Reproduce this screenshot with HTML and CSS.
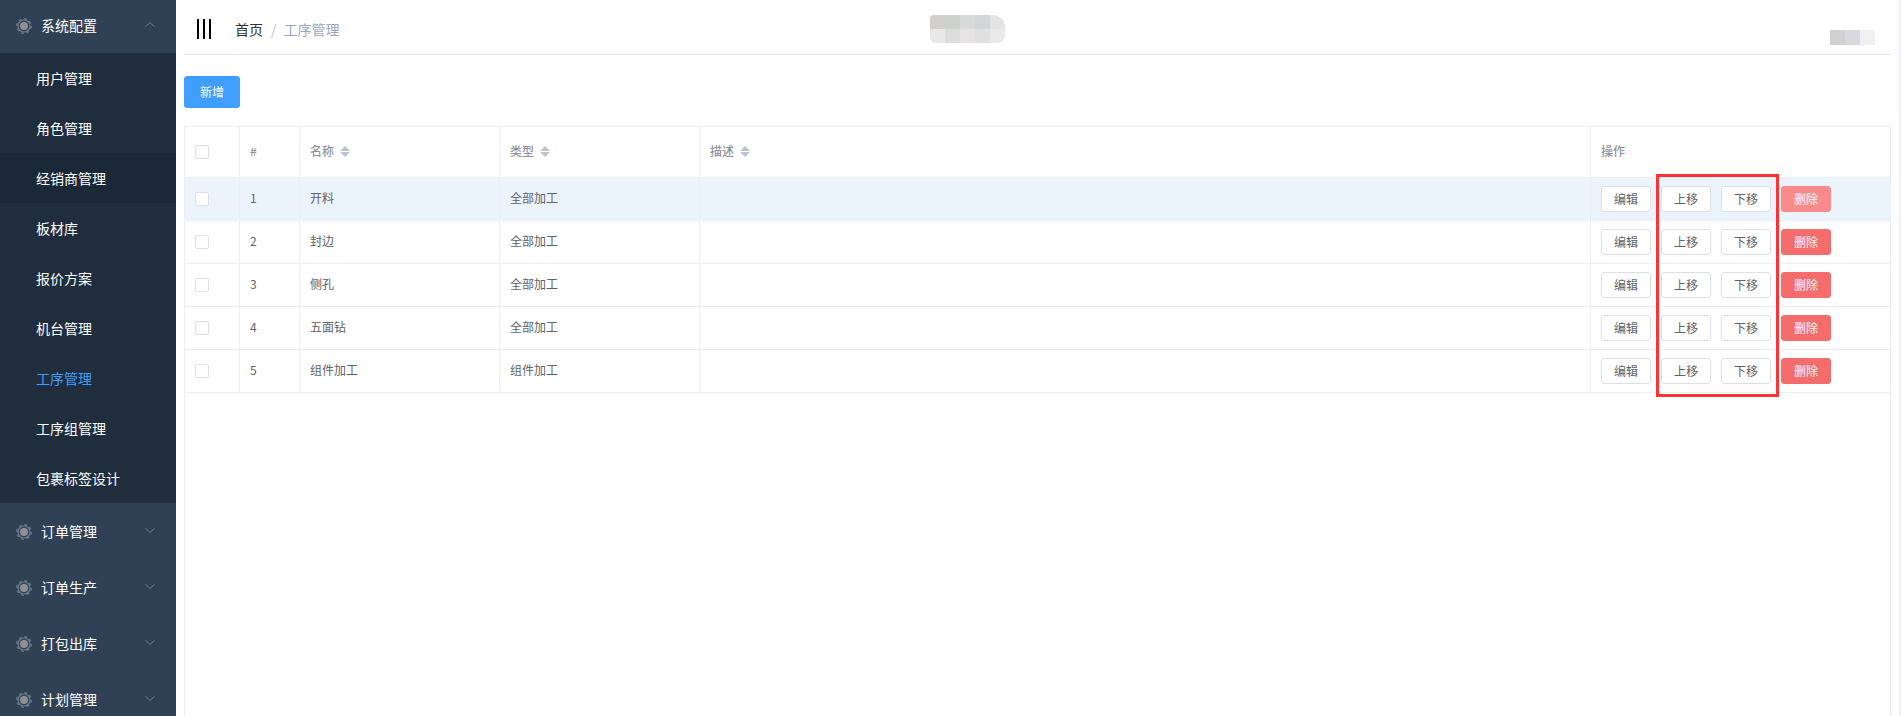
FILE: index.html
```html
<!DOCTYPE html>
<html>
  <head>
    <meta charset="utf-8" />
    <title>工序管理</title>
    <link rel="stylesheet" href="styles.css">
  </head>
  <body>
    <svg class="defs" width="0" height="0">
      <symbol id="gear" viewBox="0 0 16 16">
        <circle cx="8" cy="8" r="6" fill="none" stroke="currentColor" stroke-width="1.2" />
        <circle cx="8" cy="8" r="7.2" fill="none" stroke="currentColor" stroke-width="1.4" stroke-dasharray="2.8 2.85" />
        <circle cx="8" cy="8" r="4" fill="#8b9099" />
      </symbol>
    </svg>

    <div class="app">
      <div class="sidebar">
        <div class="menu-title">
          <svg class="gear"><use href="#gear" /></svg>
          <span>系统配置</span>
          <svg class="arrow" viewBox="0 0 10 5"><path d="M.5 4.6L5 .6l4.5 4" /></svg>
        </div>
        <div class="menu-item">用户管理</div>
        <div class="menu-item">角色管理</div>
        <div class="menu-item hover">经销商管理</div>
        <div class="menu-item">板材库</div>
        <div class="menu-item">报价方案</div>
        <div class="menu-item">机台管理</div>
        <div class="menu-item active">工序管理</div>
        <div class="menu-item">工序组管理</div>
        <div class="menu-item">包裹标签设计</div>
        <div class="menu-title">
          <svg class="gear"><use href="#gear" /></svg>
          <span>订单管理</span>
          <svg class="arrow" viewBox="0 0 10 5"><path d="M.5 .4L5 4.4l4.5-4" /></svg>
        </div>
        <div class="menu-title">
          <svg class="gear"><use href="#gear" /></svg>
          <span>订单生产</span>
          <svg class="arrow" viewBox="0 0 10 5"><path d="M.5 .4L5 4.4l4.5-4" /></svg>
        </div>
        <div class="menu-title">
          <svg class="gear"><use href="#gear" /></svg>
          <span>打包出库</span>
          <svg class="arrow" viewBox="0 0 10 5"><path d="M.5 .4L5 4.4l4.5-4" /></svg>
        </div>
        <div class="menu-title">
          <svg class="gear"><use href="#gear" /></svg>
          <span>计划管理</span>
          <svg class="arrow" viewBox="0 0 10 5"><path d="M.5 .4L5 4.4l4.5-4" /></svg>
        </div>
      </div>

      <div class="main">
        <div class="navbar">
          <div class="hamburger"><i></i><i></i><i></i></div>
          <div class="breadcrumb">
            <span class="crumb-home">首页</span>
            <span class="crumb-sep">/</span>
            <span class="crumb-current">工序管理</span>
          </div>
          <div class="mosaic mosaic-title">
            <i></i><i></i><i></i><i></i><i></i>
            <i></i><i></i><i></i><i></i><i></i>
          </div>
          <div class="mosaic mosaic-user"><i></i><i></i><i></i></div>
        </div>

        <div class="toolbar">
          <button class="btn btn-primary">新增</button>
        </div>

        <div class="table-wrap">
          <table class="data-table">
            <colgroup>
              <col class="col-check" />
              <col class="col-index" />
              <col class="col-name" />
              <col class="col-type" />
              <col />
              <col class="col-actions" />
            </colgroup>
            <thead>
              <tr>
                <th class="check-cell"><span class="checkbox"></span></th>
                <th>#</th>
                <th>名称<span class="sort"></span></th>
                <th>类型<span class="sort"></span></th>
                <th>描述<span class="sort"></span></th>
                <th>操作</th>
              </tr>
            </thead>
            <tbody>
              <tr class="current">
                <td class="check-cell"><span class="checkbox"></span></td>
                <td>1</td>
                <td>开料</td>
                <td>全部加工</td>
                <td></td>
                <td class="actions"><button class="btn">编辑</button><button class="btn">上移</button><button class="btn">下移</button><button class="btn btn-danger">删除</button></td>
              </tr>
              <tr>
                <td class="check-cell"><span class="checkbox"></span></td>
                <td>2</td>
                <td>封边</td>
                <td>全部加工</td>
                <td></td>
                <td class="actions"><button class="btn">编辑</button><button class="btn">上移</button><button class="btn">下移</button><button class="btn btn-danger">删除</button></td>
              </tr>
              <tr>
                <td class="check-cell"><span class="checkbox"></span></td>
                <td>3</td>
                <td>侧孔</td>
                <td>全部加工</td>
                <td></td>
                <td class="actions"><button class="btn">编辑</button><button class="btn">上移</button><button class="btn">下移</button><button class="btn btn-danger">删除</button></td>
              </tr>
              <tr>
                <td class="check-cell"><span class="checkbox"></span></td>
                <td>4</td>
                <td>五面钻</td>
                <td>全部加工</td>
                <td></td>
                <td class="actions"><button class="btn">编辑</button><button class="btn">上移</button><button class="btn">下移</button><button class="btn btn-danger">删除</button></td>
              </tr>
              <tr>
                <td class="check-cell"><span class="checkbox"></span></td>
                <td>5</td>
                <td>组件加工</td>
                <td>组件加工</td>
                <td></td>
                <td class="actions"><button class="btn">编辑</button><button class="btn">上移</button><button class="btn">下移</button><button class="btn btn-danger">删除</button></td>
              </tr>
            </tbody>
          </table>
          <div class="callout"></div>
        </div>
      </div>
      <div class="page-edge"></div>
    </div>
  </body>
</html>
```

FILE: styles.css
```css
* {
  box-sizing: border-box;
}
html,
body {
  height: 100%;
  margin: 0;
  overflow: hidden;
}
body {
  font-family: "Noto Sans CJK SC", "Liberation Sans", sans-serif;
  font-size: 14px;
  color: #606266;
  background-color: #fff;
}
.defs {
  position: absolute;
}
.app {
  display: flex;
  height: 100%;
}

/* sidebar */
.sidebar {
  flex: 0 0 176px;
  background-color: #304156;
  overflow: hidden;
}
.menu-title {
  display: flex;
  align-items: center;
  height: 56px;
  padding-left: 16px;
  color: #fff;
}
.menu-title:first-child {
  margin-top: -3px;
}
.menu-title span {
  margin-left: 9px;
  width: 104px;
}
.gear {
  width: 16px;
  height: 16px;
  margin-top: 2px;
  color: #6f7a88;
}
.arrow {
  width: 10px;
  height: 5px;
  margin-top: -2px;
  fill: none;
  stroke: #727e8d;
  stroke-width: 1;
}
.menu-item {
  height: 50px;
  line-height: 50px;
  padding-left: 36px;
  color: #fff;
  background-color: #1f2d3d;
}
.menu-item.hover {
  background-color: #1a2838;
}
.menu-item.active {
  color: #409eff;
}

/* top bar */
.main {
  flex: 1;
  display: flex;
  flex-direction: column;
  min-width: 0;
  padding-left: 8px;
}
.navbar {
  display: flex;
  align-items: center;
  flex: 0 0 55px;
  padding-left: 13px;
  border-bottom: 1px solid #e6e6e6;
}
.hamburger {
  display: flex;
  gap: 4px;
  margin-top: 4px;
}
.hamburger i {
  width: 2px;
  height: 20px;
  background-color: #000;
}
.breadcrumb {
  display: flex;
  margin-left: 24px;
  margin-top: 4px;
}
.crumb-home {
  color: #303133;
}
.crumb-sep {
  margin: 0 7px 0 8px;
  color: #c0c4cc;
}
.crumb-current {
  color: #97a8be;
}
.mosaic {
  display: grid;
}
.mosaic i {
  height: 14px;
  background-color: #e0e0e0;
}
.mosaic-title {
  grid-template-columns: repeat(5, 15px);
  margin-left: 590px;
  margin-top: 4px;
  border-radius: 4px 12px 8px 6px;
  overflow: hidden;
}
.mosaic-title i:nth-child(1) { background-color: #d0cfcd; }
.mosaic-title i:nth-child(2) { background-color: #cdd1ce; }
.mosaic-title i:nth-child(3) { background-color: #dadada; }
.mosaic-title i:nth-child(4) { background-color: #d3d5d6; }
.mosaic-title i:nth-child(5) { background-color: #e3e3e3; }
.mosaic-title i:nth-child(6) { background-color: #e7e8e7; }
.mosaic-title i:nth-child(7) { background-color: #dcdddd; }
.mosaic-title i:nth-child(8) { background-color: #e7e3e3; }
.mosaic-title i:nth-child(9) { background-color: #e0e0e1; }
.mosaic-title i:nth-child(10) { background-color: #e8eaea; }
.mosaic-user {
  grid-template-columns: repeat(3, 15px);
  margin-left: auto;
  margin-right: 16px;
  margin-top: 21px;
}
.mosaic-user i {
  height: 15px;
}
.mosaic-user i:nth-child(1) { background-color: #d1d1d1; }
.mosaic-user i:nth-child(2) { background-color: #d8d9de; }
.mosaic-user i:nth-child(3) { background-color: #f0f0f0; }

/* buttons */
.toolbar {
  padding: 21px 0 18px;
}
.btn {
  width: 50px;
  height: 26px;
  padding: 0;
  border: 1px solid #dcdfe6;
  border-radius: 3px;
  background-color: #fff;
  color: #606266;
  font-family: inherit;
  font-size: 12px;
  line-height: 1;
}
.btn + .btn {
  margin-left: 10px;
}
.btn-primary {
  width: 56px;
  height: 32px;
  border-color: #409eff;
  background-color: #409eff;
  color: #fff;
}
.btn-danger {
  border-color: #f56c6c;
  background-color: #f56c6c;
  color: #fff;
}
.current .btn-danger {
  border-color: #f98b8b;
  background-color: #f98b8b;
}

/* table */
.table-wrap {
  position: relative;
  flex: 1;
  border: 1px solid #ebeef5;
  border-bottom: 0;
}
.data-table {
  width: 100%;
  table-layout: fixed;
  border-collapse: separate;
  border-spacing: 0;
  font-size: 12px;
}
.col-check { width: 55px; }
.col-index { width: 60px; }
.col-name { width: 200px; }
.col-type { width: 200px; }
.col-actions { width: 299px; }
.data-table th,
.data-table td {
  padding: 0 10px 4px;
  text-align: left;
  border-bottom: 1px solid #ebeef5;
  border-right: 1px solid #ebeef5;
}
.data-table th:last-child,
.data-table td:last-child {
  border-right: 0;
}
.data-table th {
  height: 51px;
  color: #909399;
  font-weight: 500;
}
.data-table td {
  height: 43px;
}
.data-table .check-cell,
.data-table .actions {
  padding-bottom: 0;
}
.current td {
  background-color: #ebf3fd;
}
.actions {
  white-space: nowrap;
}
.checkbox {
  display: block;
  width: 14px;
  height: 14px;
  border: 1px solid #dcdfe6;
  border-radius: 2px;
  background-color: #fff;
}
.sort {
  display: inline-flex;
  flex-direction: column;
  gap: 1px;
  vertical-align: middle;
  margin-left: 6px;
  margin-top: -1px;
}
.sort::before,
.sort::after {
  content: "";
  border-left: 5px solid transparent;
  border-right: 5px solid transparent;
}
.sort::before {
  border-bottom: 5px solid #c0c4cc;
}
.sort::after {
  border-top: 5px solid #c0c4cc;
}

/* red marker drawn over the move buttons */
.callout {
  position: absolute;
  left: 1471px;
  top: 47px;
  width: 123px;
  height: 223px;
  border: 3px solid #f33;
}
.page-edge {
  flex: 0 0 2px;
  margin-left: 8px;
  background-color: #f0f0f5;
}
```
